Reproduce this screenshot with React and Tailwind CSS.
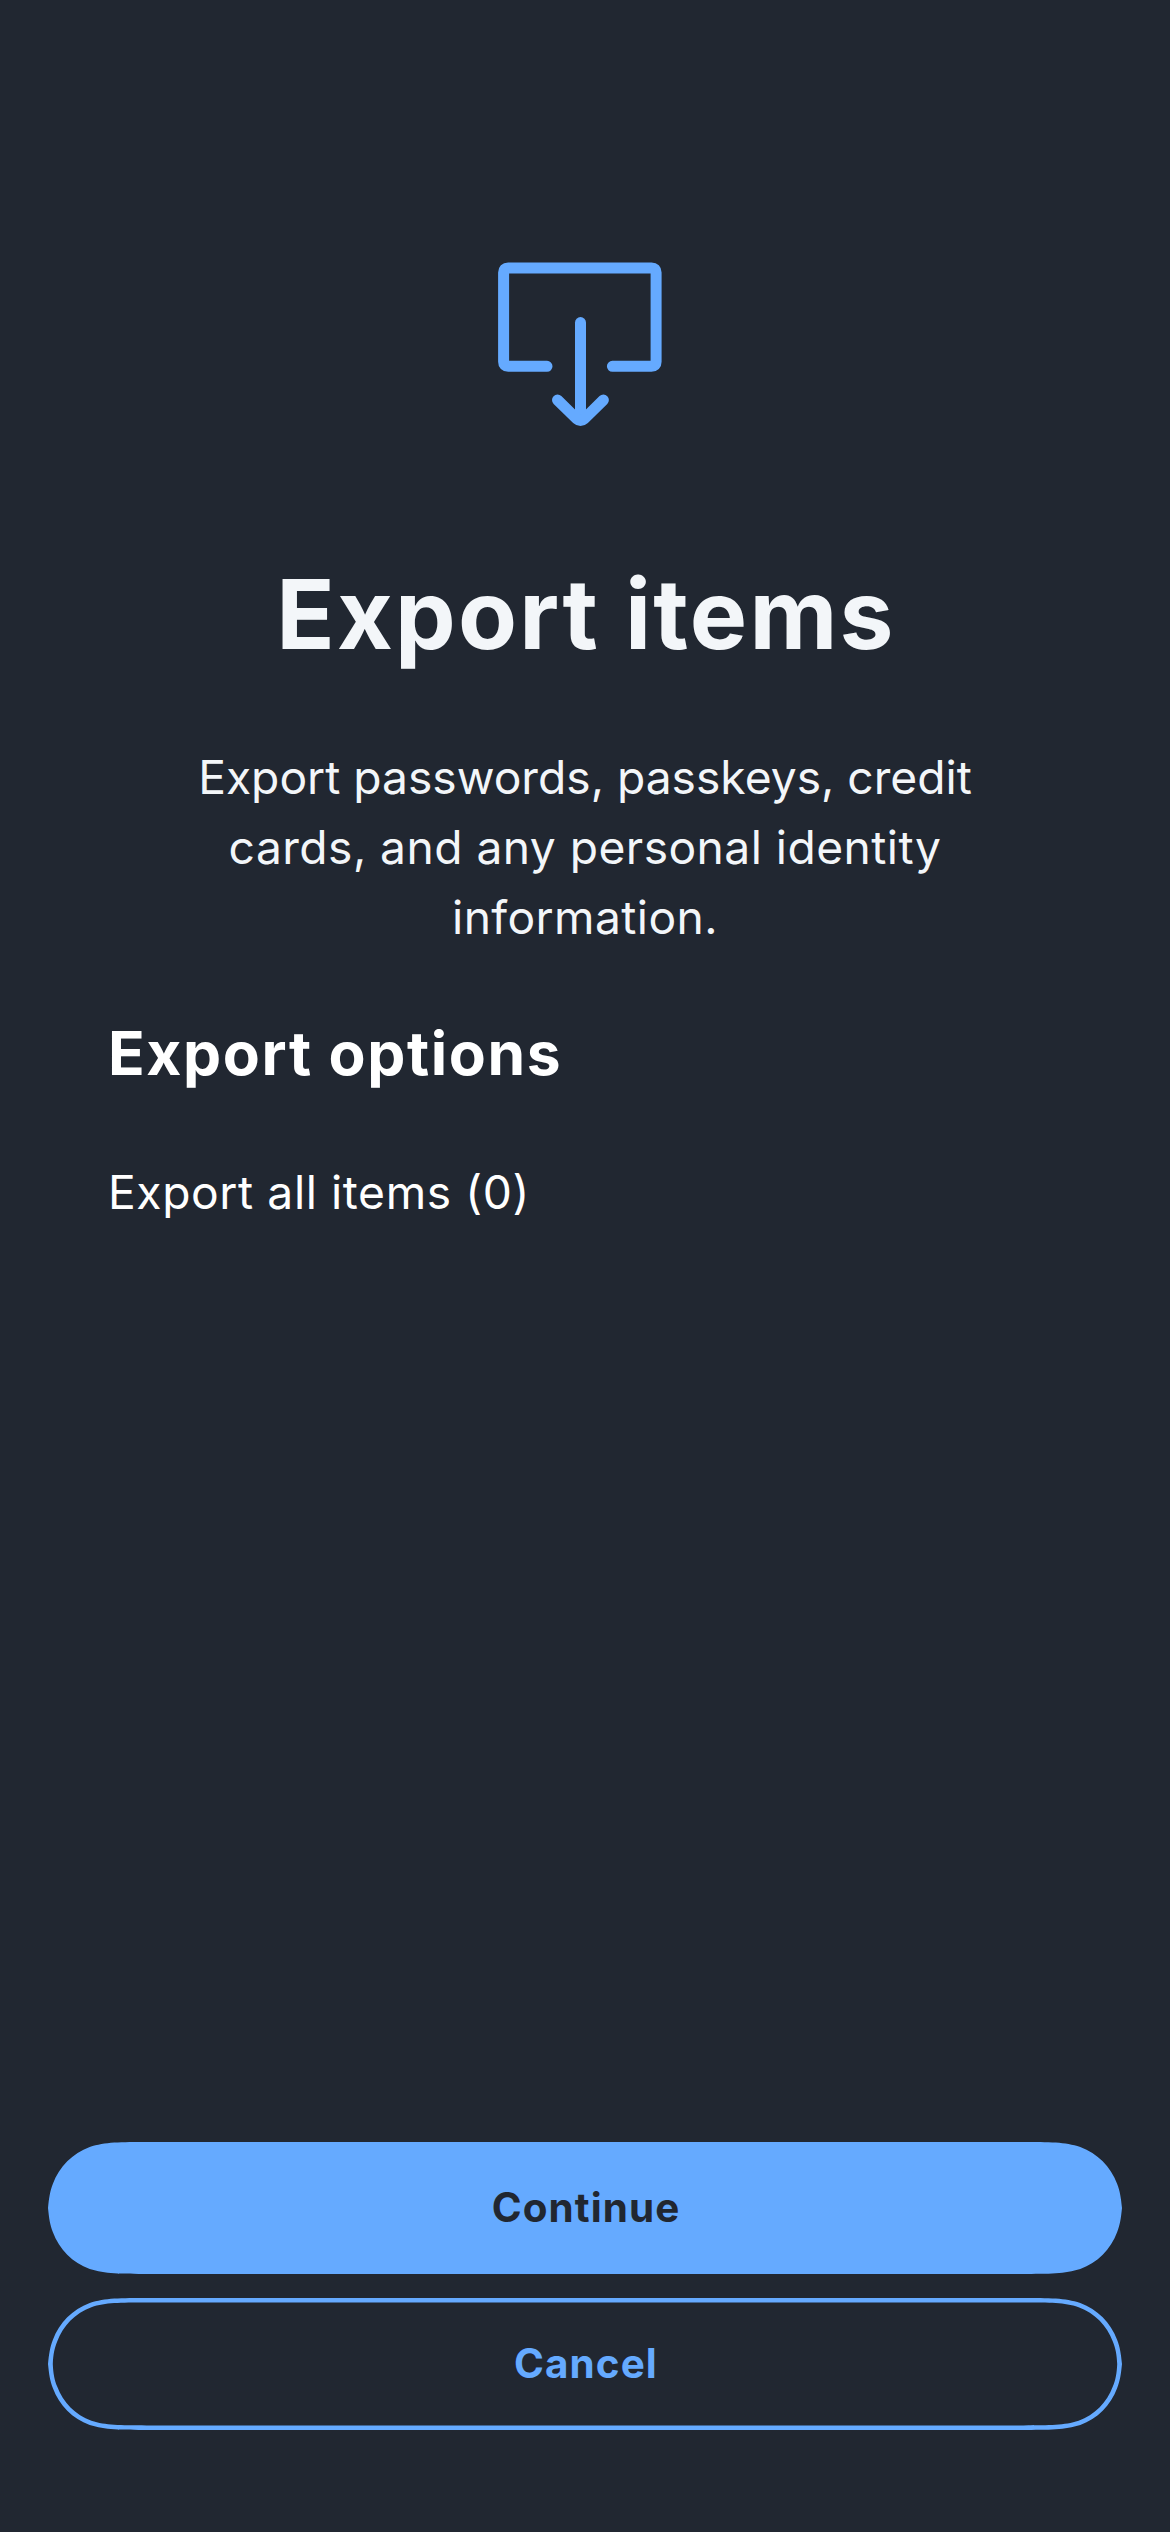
function ExportIcon() {
  return (
    <svg
      className="ml-[490px] block h-[180px] w-[180px]"
      viewBox="490 254 180 180"
      fill="none"
      stroke="#65aaff"
      strokeWidth="11"
      strokeLinecap="round"
      strokeLinejoin="round"
      aria-hidden="true"
    >
      <path d="M547 366.3H508.2Q503.6 366.3 503.6 361.7V272.6Q503.6 268 508.2 268H651.5Q656.1 268 656.1 272.6V361.7Q656.1 366.3 651.5 366.3H612.4" />
      <path d="M580.5 322.6V418" />
      <path d="M557.5 400L577 419.2Q578.2 420.4 580.5 420.4Q582.8 420.4 584 419.2L603.4 400" />
    </svg>
  );
}

export default function App() {
  return (
    <main className="flex h-[2532px] w-[1170px] flex-col bg-[#212731] pt-[254px] font-['Inter',sans-serif] text-[#f3f6f9]">
      <ExportIcon />

      <h1 className="mt-[116px] whitespace-nowrap pl-[2px] text-center text-[96.3px] leading-[128px] font-bold tracking-[2.2px]">
        Export items
      </h1>

      <p className="mt-[64px] flex flex-col items-center whitespace-nowrap text-[46.2px] leading-[70px]">
        <span>Export passwords, passkeys, credit</span>
        <span className="tracking-[0.45px]">cards, and any personal identity</span>
        <span className="tracking-[0.4px]">information.</span>
      </p>

      <section className="mt-[61px] px-[108px] text-white">
        <h2 className="whitespace-nowrap text-[60.5px] leading-[80px] font-bold tracking-[1.6px]">
          Export options
        </h2>
        <p className="mt-[64px] whitespace-nowrap text-[46.2px] leading-[70px] tracking-[0.6px]">
          Export all items (0)
        </p>
      </section>

      <div className="mt-auto flex flex-col gap-6 px-12 pb-[102px] text-[40.4px] font-bold tracking-[1.1px]">
        <button className="h-[132px] bg-[#65aaff] pt-px pl-[2px] text-[#212731] [clip-path:path('M100.9_0C71.8_0_57.3_0_41.7_4.9C24.6_11.2_11.2_24.6_4.9_41.7C2_49_1_56_0_66C1_76_2_83_4.9_90.3C11.2_107.4_24.6_120.8_41.7_127.1C57.3_132_71.8_132_100.9_132H973.1C1002.2_132_1016.7_132_1032.3_127.1C1049.4_120.8_1062.8_107.4_1069.1_90.3C1072_83_1073_76_1074_66C1073_56_1072_49_1069.1_41.7C1062.8_24.6_1049.4_11.2_1032.3_4.9C1016.7_0_1002.2_0_973.1_0Z')]">
          Continue
        </button>
        <button className="relative h-[132px] pt-px pl-[2px] text-[#65aaff]">
          <span
            aria-hidden="true"
            className="absolute inset-0 bg-[#65aaff] [clip-path:path(evenodd,'M100.9_0C71.8_0_57.3_0_41.7_4.9C24.6_11.2_11.2_24.6_4.9_41.7C2_49_1_56_0_66C1_76_2_83_4.9_90.3C11.2_107.4_24.6_120.8_41.7_127.1C57.3_132_71.8_132_100.9_132H973.1C1002.2_132_1016.7_132_1032.3_127.1C1049.4_120.8_1062.8_107.4_1069.1_90.3C1072_83_1073_76_1074_66C1073_56_1072_49_1069.1_41.7C1062.8_24.6_1049.4_11.2_1032.3_4.9C1016.7_0_1002.2_0_973.1_0ZM98.5_4.6C71.4_4.6_57.9_4.6_43.4_9.2C27.5_15_15_27.5_9.2_43.4C6.5_50_5.2_56_4.8_66C5.2_76_6.5_82_9.2_88.6C15_104.5_27.5_117_43.4_122.8C57.9_127.4_71.4_127.4_98.5_127.4H975.5C1002.6_127.4_1016.1_127.4_1030.6_122.8C1046.5_117_1059_104.5_1064.8_88.6C1067.5_82_1068.8_76_1069.2_66C1068.8_56_1067.5_50_1064.8_43.4C1059_27.5_1046.5_15_1030.6_9.2C1016.1_4.6_1002.6_4.6_975.5_4.6Z')]"
          />
          Cancel
        </button>
      </div>
    </main>
  );
}
